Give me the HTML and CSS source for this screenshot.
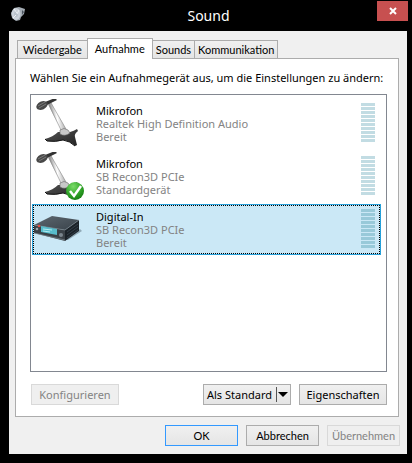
FILE: index.html
```html
<!DOCTYPE html>
<html lang="de">
<head>
<meta charset="utf-8">
<title>Sound</title>
<link rel="stylesheet" href="styles.css">
</head>
<body>
<svg class="defs" aria-hidden="true">
  <defs>
    <linearGradient id="arm" x1="0" y1=".6" x2="1" y2=".4">
      <stop offset=".2" stop-color="#999"/><stop offset=".5" stop-color="#fff"/><stop offset=".9" stop-color="#aaa"/>
    </linearGradient>
    <linearGradient id="base" x1="0" y1="0" x2="1" y2="1">
      <stop offset="0" stop-color="#555"/><stop offset=".5" stop-color="#3c3c3c"/><stop offset="1" stop-color="#222"/>
    </linearGradient>
    <linearGradient id="boxtop" x1="0" y1="0" x2="1" y2="1">
      <stop offset="0" stop-color="#5d6870"/><stop offset="1" stop-color="#39424a"/>
    </linearGradient>
    <radialGradient id="ok" cx=".4" cy=".25" r=".8">
      <stop offset="0" stop-color="#7bdc69"/><stop offset=".6" stop-color="#2fa327"/><stop offset="1" stop-color="#14780f"/>
    </radialGradient>
    <symbol id="mic" viewBox="0 0 48 48">
      <path d="M12 40q8-2 13-7l12 0q4-1 7-3l1 2q-4 3-3 6l2 8-2 1q-5-5-12-6-8 3-16 1z" fill="url(#base)"/>
      <path d="M12 40l2 2q9 1 16-1 7 1 12 6" fill="none" stroke="#151515"/>
      <path d="M15 5l3-2 15 27-5 2z" fill="url(#arm)"/>
      <path d="M18 4l15 26M16 6l12 25" fill="none" stroke="#888" stroke-width=".6"/>
      <path d="M27 31q4-3 8 0l2 3q-5 4-10 1z" fill="#c8c8c8" stroke="#666" stroke-width=".6"/>
      <path d="M12 3l10-4 2 2-10 5z" fill="#333"/>
      <ellipse cx="9" cy="6.500" rx="6" ry="4" transform="rotate(-24 9 6.500)" fill="#484848"/>
      <path d="M5 7l7-4M6 9l7-4" stroke="#999" stroke-width=".6"/>
    </symbol>
  </defs>
</svg>
<main class="window">
  <header class="titlebar">
    <svg class="app-icon" viewBox="0 0 16 16" aria-hidden="true">
      <path d="M4 2l5-1 3 1 3 1-1 5-3 3-1 3-4 1-4-3-1-5z" fill="#a3abb3"/>
      <ellipse cx="6" cy="8" rx="4.500" ry="6" fill="#ccd3db"/>
      <ellipse cx="6" cy="8" rx="2" ry="3" fill="#bac3cc"/>
      <path d="M4 3l3 4M9 4l-2 4M3 12l3-3" stroke="#eef2f5"/>
      <path d="M12 4l2 2-2 3z" fill="#4e5761"/>
    </svg>
    <h1 class="title">Sound</h1>
    <button class="close" type="button" aria-label="Schließen">
      <svg viewBox="0 0 8 8" aria-hidden="true"><path d="M1 1l6 6M7 1l-6 6"/></svg>
    </button>
  </header>
  <div class="dialog">
    <div class="tabs" role="tablist">
      <button class="tab" type="button" role="tab">Wiedergabe</button>
      <button class="tab active" type="button" role="tab" aria-selected="true">Aufnahme</button>
      <button class="tab" type="button" role="tab">Sounds</button>
      <button class="tab" type="button" role="tab">Kommunikation</button>
    </div>
    <section class="panel" role="tabpanel">
      <p class="intro" id="intro">Wählen Sie ein Aufnahmegerät aus, um die Einstellungen zu ändern:</p>
      <ul class="devices" role="listbox" aria-labelledby="intro">
        <li class="device" role="option">
          <svg class="picture" viewBox="0 0 48 48" aria-hidden="true"><use href="#mic"/></svg>
          <div class="info"><b>Mikrofon</b><span>Realtek High Definition Audio</span><span>Bereit</span></div>
          <div class="meter"></div>
        </li>
        <li class="device" role="option">
          <svg class="picture" viewBox="0 0 48 48" aria-hidden="true"><use href="#mic"/>
            <circle cx="42" cy="39" r="9" fill="url(#ok)"/>
            <path d="M37 39l4 5 7-10" fill="none" stroke="#fff" stroke-width="2.500"/>
          </svg>
          <div class="info"><b>Mikrofon</b><span>SB Recon3D PCIe</span><span>Standardgerät</span></div>
          <div class="meter"></div>
        </li>
        <li class="device selected" role="option" aria-selected="true">
          <svg class="picture" viewBox="0 0 48 48" aria-hidden="true">
            <path d="M33 35l14-11 2 2-14 9z" fill="#91aab7"/>
            <path d="M1 20l18-9 27 4-14 10z" fill="url(#boxtop)"/>
            <path d="M1 20l31 5v11L1 28z" fill="#3a4147"/>
            <path d="M32 25l14-10v11L32 36z" fill="#1b2228"/>
            <path d="M34 27l11-8M34 30l11-8M34 33l11-8" stroke="#3a4650" stroke-width=".8"/>
            <path d="M1 20l31 5 14-10M1 28l31 7" fill="none" stroke="#7b868e" stroke-width=".7"/>
            <path d="M8 21l16 3v6L8 27z" fill="#58bccb"/>
            <path d="M10 24l9 1M10 26l7 1" stroke="#b2ecf2"/>
            <circle cx="6" cy="21" r="1.300" fill="#e34b43"/>
            <circle cx="4" cy="24" r="1.300" fill="#9ba6ad"/>
            <circle cx="28" cy="30" r="2" fill="#7a858d"/>
          </svg>
          <div class="info"><b>Digital-In</b><span>SB Recon3D PCIe</span><span>Bereit</span></div>
          <div class="meter"></div>
        </li>
      </ul>
      <div class="actions">
        <button class="btn wide first" type="button" disabled>Konfigurieren</button>
        <button class="btn wide split" type="button">Als Standard<span class="drop"></span></button>
        <button class="btn wide" type="button">Eigenschaften</button>
      </div>
    </section>
    <footer class="footer">
      <button class="btn default" type="button">OK</button>
      <button class="btn" type="button">Abbrechen</button>
      <button class="btn" type="button" disabled>Übernehmen</button>
    </footer>
  </div>
</main>
</body>
</html>
```
FILE: styles.css
```css
* { box-sizing: border-box; }
body {
  margin: 0;
  background: #000;
  color: #000;
  font: 11px/13px "Noto Sans", "Open Sans", sans-serif;
}
button { font: inherit; color: inherit; padding: 0; margin: 0; }
.defs { position: absolute; width: 0; height: 0; }
.window { padding: 0 5px 9px 9px; }
.titlebar {
  display: grid;
  grid-template-columns: 31px 1fr 31px;
  align-items: start;
  height: 31px;
  margin-right: -1px;
}
.app-icon { width: 16px; height: 16px; margin: 6px 0 0 1px; }
.title {
  margin: 6px 0 0;
  color: #fff;
  font-size: 14px;
  line-height: 20px;
  font-weight: 400;
  text-align: center;
}
.close {
  display: grid;
  place-items: center;
  height: 20px;
  margin-top: 1px;
  border: 0;
  background: #c75050;
}
.close svg { width: 8px; height: 8px; }
.close path { stroke: #fff; stroke-width: 2; }
.dialog { padding: 7px 8px 8px 6px; background: #f0f0f0; }
.tabs { display: flex; align-items: flex-end; padding-left: 2px; }
.tab {
  height: 18px;
  padding: 0 3px;
  border: 1px solid #acacac;
  border-bottom: 0;
  border-right: 0;
  background: linear-gradient(#f0f0f0, #e5e5e5);
}
.tabs, .footer { font-family: Lato, "Noto Sans", sans-serif; }
.tab:first-child { padding: 0 5px; }
.tab:last-child { border-right: 1px solid #acacac; }
.tab.active {
  position: relative;
  height: 21px;
  margin-bottom: -1px;
  padding: 0 7px 2px;
  border-right: 1px solid #acacac;
  background: #fff;
}
.tab.active + .tab { border-left: 0; }
.panel {
  padding: 12px 11px 11px 14px;
  border: 1px solid #acacac;
  background: #fff;
}
.intro { margin: 0 0 10px; white-space: nowrap; }
.devices {
  display: flex;
  flex-direction: column;
  gap: 2px;
  min-height: 278px;
  margin: 0;
  padding: 3px 5px 3px 1px;
  border: 1px solid #828790;
  list-style: none;
}
.device {
  display: flex;
  align-items: flex-start;
  height: 51px;
  padding: 1px 6px 1px 1px;
}
.device.selected {
  padding: 0 5px 0 0;
  border: 1px solid #26a0da;
  outline: 1px dotted #000;
  outline-offset: -2px;
  background: #cbe8f6;
}
.picture { width: 48px; height: 48px; overflow: visible; }
.info { display: flex; flex: 1; flex-direction: column; padding: 5px 0 0 15px; }
.info b { font-weight: 400; }
.info span { color: #838383; }
.meter {
  width: 14px;
  height: 39px;
  margin-top: 4px;
  background: repeating-linear-gradient(#c2dce3 0 3px, transparent 3px 4px);
}
.selected .meter { background: repeating-linear-gradient(#98c9d9 0 3px, transparent 3px 4px); }
.actions { display: flex; gap: 8px; margin: 12px 0 0 1px; }
.btn {
  width: 73px;
  height: 21px;
  border: 1px solid #acacac;
  background: linear-gradient(#f0f0f0, #e5e5e5);
  white-space: nowrap;
}
.btn.wide { width: 88px; }
.btn.first { margin-right: auto; }
.btn:disabled { border-color: #d9d9d9; background: #efefef; color: #838383; }
.btn.default { border-color: #3399ff; }
.split { display: flex; align-items: center; justify-content: space-between; padding: 0 2px 0 3px; }
.drop {
  display: flex;
  align-items: center;
  height: 15px;
  padding-left: 1px;
  border-left: 1px solid #555;
}
.drop::after {
  content: "";
  border: 5px solid transparent;
  border-top-color: #000;
  border-bottom: 0;
}
.footer { display: flex; justify-content: flex-end; gap: 8px; padding-top: 8px; margin-right: -1px; }
```
